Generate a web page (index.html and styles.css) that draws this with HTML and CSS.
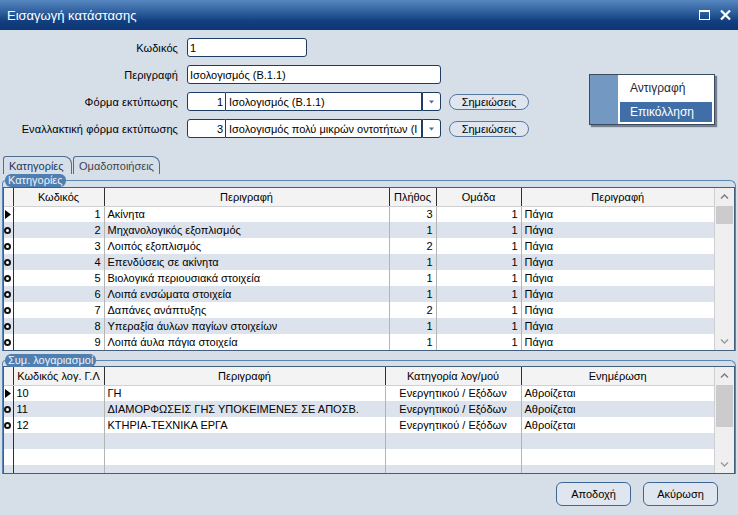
FILE: index.html
```html
<!DOCTYPE html>
<html lang="el">
<head>
<meta charset="utf-8">
<title>Εισαγωγή κατάστασης</title>
<link rel="stylesheet" href="styles.css">
</head>
<body>
<div class="window">
  <div class="titlebar">
    <span class="title">Εισαγωγή κατάστασης</span>
    <div class="winbtns">
      <svg width="11" height="10" viewBox="0 0 11 10"><rect x="0.5" y="0.5" width="10" height="9" fill="none" stroke="#fff" stroke-width="1"/><rect x="0" y="0" width="11" height="2" fill="#fff"/></svg>
      <svg width="11" height="10" viewBox="0 0 11 10"><path d="M1 0.5 L10 9.5 M10 0.5 L1 9.5" stroke="#fff" stroke-width="2.2"/></svg>
    </div>
  </div>

  <div class="content">
    <div class="form">
      <label class="lbl">Κωδικός</label>
      <div class="ctrl"><div class="input w-code">1</div></div>

      <label class="lbl">Περιγραφή</label>
      <div class="ctrl"><div class="input w-desc">Ισολογισμός (B.1.1)</div></div>

      <label class="lbl">Φόρμα εκτύπωσης</label>
      <div class="ctrl">
        <div class="combo">
          <div class="input num">1</div>
          <div class="input ctext">Ισολογισμός (B.1.1)</div>
          <div class="input arrow"><svg width="7" height="4" viewBox="0 0 7 4"><path d="M1 0.5 L6 0.5 L3.5 3.5 Z" fill="#4b6d92"/></svg></div>
        </div>
        <button class="pill">Σημειώσεις</button>
      </div>

      <label class="lbl">Εναλλακτική φόρμα εκτύπωσης</label>
      <div class="ctrl">
        <div class="combo">
          <div class="input num">3</div>
          <div class="input ctext">Ισολογισμός πολύ μικρών οντοτήτων (Ι</div>
          <div class="input arrow"><svg width="7" height="4" viewBox="0 0 7 4"><path d="M1 0.5 L6 0.5 L3.5 3.5 Z" fill="#4b6d92"/></svg></div>
        </div>
        <button class="pill">Σημειώσεις</button>
      </div>
    </div>

    <div class="tabs">
      <div class="tab active">Κατηγορίες</div>
      <div class="tab">Ομαδοποιήσεις</div>
    </div>

    <div class="group g1">
      <span class="legend">Κατηγορίες</span>
      <div class="grid grid1">
        <table>
          <colgroup><col class="c-ind"><col style="width:91px"><col style="width:285px"><col style="width:47px"><col style="width:85px"><col style="width:193px"></colgroup>
          <thead><tr><th class="ind"></th><th>Κωδικός</th><th>Περιγραφή</th><th>Πλήθος</th><th>Ομάδα</th><th>Περιγραφή</th></tr></thead>
          <tbody>
            <tr><td class="ind"><svg class="tri" width="6" height="9" viewBox="0 0 6 9"><path d="M0 0 L6 4.5 L0 9 Z"/></svg></td><td class="r">1</td><td>Ακίνητα</td><td class="r">3</td><td class="r">1</td><td>Πάγια</td></tr>
            <tr><td class="ind"><span class="dot"></span></td><td class="r">2</td><td>Μηχανολογικός εξοπλισμός</td><td class="r">1</td><td class="r">1</td><td>Πάγια</td></tr>
            <tr><td class="ind"><span class="dot"></span></td><td class="r">3</td><td>Λοιπός εξοπλισμός</td><td class="r">2</td><td class="r">1</td><td>Πάγια</td></tr>
            <tr><td class="ind"><span class="dot"></span></td><td class="r">4</td><td>Επενδύσεις σε ακίνητα</td><td class="r">1</td><td class="r">1</td><td>Πάγια</td></tr>
            <tr><td class="ind"><span class="dot"></span></td><td class="r">5</td><td>Βιολογικά περιουσιακά στοιχεία</td><td class="r">1</td><td class="r">1</td><td>Πάγια</td></tr>
            <tr><td class="ind"><span class="dot"></span></td><td class="r">6</td><td>Λοιπά ενσώματα στοιχεία</td><td class="r">1</td><td class="r">1</td><td>Πάγια</td></tr>
            <tr><td class="ind"><span class="dot"></span></td><td class="r">7</td><td>Δαπάνες ανάπτυξης</td><td class="r">2</td><td class="r">1</td><td>Πάγια</td></tr>
            <tr><td class="ind"><span class="dot"></span></td><td class="r">8</td><td>Υπεραξία άυλων παγίων στοιχείων</td><td class="r">1</td><td class="r">1</td><td>Πάγια</td></tr>
            <tr><td class="ind"><span class="dot"></span></td><td class="r">9</td><td>Λοιπά άυλα πάγια στοιχεία</td><td class="r">1</td><td class="r">1</td><td>Πάγια</td></tr>
          </tbody>
        </table>
        <div class="vscroll">
          <div class="sarrow"><svg width="9" height="5" viewBox="0 0 9 5"><path d="M1 4.5 L4.5 1 L8 4.5" fill="none" stroke="#7a7a7a" stroke-width="1.4"/></svg></div>
          <div class="track"><div class="thumb t1"></div></div>
          <div class="sarrow"><svg width="9" height="5" viewBox="0 0 9 5"><path d="M1 0.5 L4.5 4 L8 0.5" fill="none" stroke="#9a9a9a" stroke-width="1.4"/></svg></div>
        </div>
      </div>
    </div>

    <div class="group g2">
      <span class="legend">Συμ. λογαριασμοί</span>
      <div class="grid grid2">
        <table>
          <colgroup><col class="c-ind"><col style="width:91px"><col style="width:281px"><col style="width:136px"><col style="width:193px"></colgroup>
          <thead><tr><th class="ind"></th><th>Κωδικός λογ. Γ.Λ</th><th>Περιγραφή</th><th>Κατηγορία λογ/μού</th><th>Ενημέρωση</th></tr></thead>
          <tbody>
            <tr><td class="ind"><svg class="tri" width="6" height="9" viewBox="0 0 6 9"><path d="M0 0 L6 4.5 L0 9 Z"/></svg></td><td>10</td><td>ΓΗ</td><td class="c">Ενεργητικού / Εξόδων</td><td>Αθροίζεται</td></tr>
            <tr><td class="ind"><span class="dot"></span></td><td>11</td><td>ΔΙΑΜΟΡΦΩΣΕΙΣ ΓΗΣ ΥΠΟΚΕΙΜΕΝΕΣ ΣΕ ΑΠΟΣΒ.</td><td class="c">Ενεργητικού / Εξόδων</td><td>Αθροίζεται</td></tr>
            <tr><td class="ind"><span class="dot"></span></td><td>12</td><td>ΚΤΗΡΙΑ-ΤΕΧΝΙΚΑ ΕΡΓΑ</td><td class="c">Ενεργητικού / Εξόδων</td><td>Αθροίζεται</td></tr>
            <tr><td class="ind"></td><td></td><td></td><td></td><td></td></tr>
            <tr><td class="ind"></td><td></td><td></td><td></td><td></td></tr>
            <tr><td class="ind"></td><td></td><td></td><td></td><td></td></tr>
          </tbody>
        </table>
        <div class="vscroll">
          <div class="sarrow"><svg width="9" height="5" viewBox="0 0 9 5"><path d="M1 4.5 L4.5 1 L8 4.5" fill="none" stroke="#7a7a7a" stroke-width="1.4"/></svg></div>
          <div class="track"><div class="thumb t2"></div></div>
          <div class="sarrow"><svg width="9" height="5" viewBox="0 0 9 5"><path d="M1 0.5 L4.5 4 L8 0.5" fill="none" stroke="#9a9a9a" stroke-width="1.4"/></svg></div>
        </div>
      </div>
    </div>

    <div class="footer">
      <button class="btn">Αποδοχή</button>
      <button class="btn">Ακύρωση</button>
    </div>
  </div>

  <div class="menu">
    <div class="stripe"></div>
    <div class="items">
      <div class="item">Αντιγραφή</div>
      <div class="item sel">Επικόλληση</div>
    </div>
  </div>
</div>
</body>
</html>
```
FILE: styles.css
```css
* { box-sizing: border-box; }
html, body { margin: 0; padding: 0; }
body {
  font-family: "Liberation Sans", Arial, sans-serif;
  font-size: 11px;
  color: #000;
  background: #d6dee8;
}
.window {
  position: relative;
  width: 738px;
  height: 515px;
  background: #d6dee8;
  overflow: hidden;
}
.titlebar {
  height: 30px;
  display: flex;
  align-items: center;
  justify-content: space-between;
  padding: 0 7px 0 7px;
  background: linear-gradient(#5687c0 0%, #2a5a98 45%, #123f80 70%, #0d3674 100%);
  color: #fff;
}
.title { font-size: 13px; padding-top: 1px; }
.winbtns { display: flex; gap: 10px; align-items: center; padding-right: 0; }

.content { padding: 8px 2px 0 2px; }

.form {
  display: grid;
  grid-template-columns: 176px auto;
  column-gap: 9px;
  row-gap: 8px;
  align-items: center;
}
.lbl { text-align: right; white-space: nowrap; letter-spacing: 0.1px; }
.ctrl { display: flex; align-items: center; gap: 8px; height: 19px; }
.input {
  height: 19px;
  background: #fff;
  border: 1px solid #1f3c63;
  border-radius: 3px;
  padding: 0 2px;
  display: flex;
  align-items: center;
  white-space: nowrap;
  overflow: hidden;
}
.w-code { width: 120px; }
.w-desc { width: 254px; }
.combo { display: flex; }
.num { width: 39px; justify-content: flex-end; border-radius: 3px 0 0 3px; }
.ctext { width: 196px; border-left: none; border-radius: 0; padding-left: 3px; }
.arrow { width: 19px; justify-content: center; border-radius: 0 3px 3px 0; }
.pill {
  width: 80px;
  height: 16px;
  padding: 0;
  font: inherit;
  color: #000;
  background: #dfe6ef;
  border: 1px solid #58799f;
  border-radius: 8px;
  margin-top: 1px;
}

.tabs { display: flex; margin: 18px 0 0 1px; height: 18px; }
.tab {
  height: 18px;
  padding: 0 5px;
  display: flex;
  align-items: center;
  border: 1px solid #4f6d8f;
  border-bottom: none;
  border-radius: 3px 8px 0 0;
  color: #3c4652;
  margin-right: 1px;
}
.tab.active { color: #1b3660; width: 69px; }

.group {
  position: relative;
  border: 1px solid #5a86b6;
  border-bottom: none;
  border-radius: 4px 6px 0 0;
  padding-top: 6px;
}
.g1 { margin-top: 6px; }
.g2 { margin-top: 9px; padding-top: 5px; }
.legend {
  position: absolute;
  top: -7px;
  left: 2px;
  height: 13px;
  line-height: 12px;
  padding: 0 3px;
  background: #4f7eb0;
  color: #eef3f9;
  border-radius: 6px;
  font-size: 11px;
}

.grid {
  display: flex;
  border: 1px solid #435f7d;
  background: #fff;
  overflow: hidden;
}
.grid1 { height: 164px; }
.grid2 { height: 108px; }
table {
  width: 710px;
  border-collapse: collapse;
  table-layout: fixed;
  align-self: flex-start;
}
.c-ind { width: 9px; }
th {
  height: 18px;
  font-weight: normal;
  text-align: center;
  background: #f3f3f3;
  border-right: 1px solid #2f2f2f;
  border-bottom: 1px solid #d0d0d0;
  padding: 0 2px;
  white-space: nowrap;
  overflow: hidden;
}
td {
  height: 16px;
  padding: 0 3px;
  border-right: 1px solid #b4b4b4;
  white-space: nowrap;
  overflow: hidden;
}
th:last-child, td:last-child { border-right: none; }
th.ind, td.ind { padding: 0; border-right: 1px solid #2f2f2f; }
td.ind { text-align: left; vertical-align: middle; }
tbody tr:nth-child(even) td { background: #dce3ec; }
td.r { text-align: right; }
td.c { text-align: center; }
.tri { display: block; margin-left: 1px; }
.dot {
  display: block;
  width: 7px;
  height: 7px;
  border-radius: 50%;
  border: 2px solid #111;
  background: #fff;
}

.vscroll {
  width: 20px;
  flex: none;
  display: flex;
  flex-direction: column;
  background: #efefef;
  border-left: 1px solid #cfcfcf;
}
.sarrow { height: 17px; display: flex; align-items: center; justify-content: center; }
.track { flex: 1; }
.thumb { margin: 1px 1px 0 1px; background: #cbcbcb; }
.t1 { height: 18px; }
.t2 { height: 42px; }

.footer {
  display: flex;
  justify-content: flex-end;
  gap: 12px;
  padding: 8px 18px 0 0;
}
.btn {
  width: 75px;
  height: 24px;
  font: inherit;
  font-size: 11px;
  color: #000;
  background: #dfe6ef;
  border: 1px solid #3d6797;
  border-radius: 6px;
}

.menu {
  position: absolute;
  left: 589px;
  top: 74px;
  width: 126px;
  height: 51px;
  display: flex;
  border: 1px solid #3b4b5e;
  background: #fff;
  box-shadow: 2px 2px 1px rgba(40, 50, 65, 0.55);
}
.stripe { width: 28px; background: #7399c2; }
.items { flex: 1; padding: 1px 2px 0 2px; }
.item { height: 25px; line-height: 25px; padding-left: 10px; font-size: 12px; color: #1a2a3c; }
.item.sel { height: 20px; line-height: 20px; background: #3f6fa6; color: #fff; margin-top: 1px; }
```
